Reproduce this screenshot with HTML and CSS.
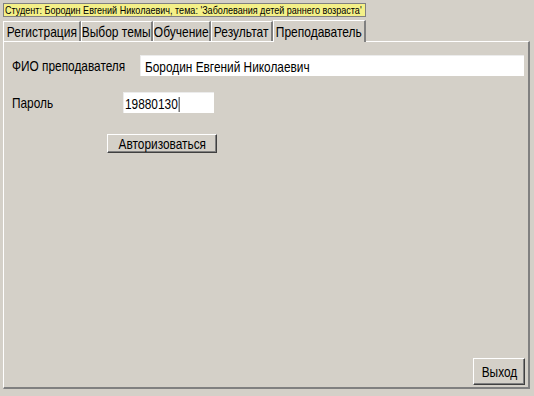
FILE: index.html
```html
<!DOCTYPE html>
<html lang="ru">
<head>
    <meta charset="UTF-8">
    <title>Преподаватель</title>
    <link rel="stylesheet" href="styles.css">
</head>
<body>
    <div class="window">
        <div class="status"><span class="narrow">Студент: Бородин Евгений Николаевич, тема: 'Заболевания детей раннего возраста'</span></div>
        <div class="tabs">
            <div class="tab t-reg"><span class="narrow">Регистрация</span></div>
            <div class="tab t-topic"><span class="narrow">Выбор темы</span></div>
            <div class="tab t-learn"><span class="narrow">Обучение</span></div>
            <div class="tab t-result"><span class="narrow">Результат</span></div>
            <div class="tab t-teacher active"><span class="narrow">Преподаватель</span></div>
        </div>
        <div class="panel">
            <div class="row">
                <label class="label"><span class="narrow">ФИО преподавателя</span></label>
                <div class="field wide"><span class="narrow">Бородин Евгений Николаевич</span></div>
            </div>
            <div class="row pass-row">
                <label class="label short"><span class="narrow">Пароль</span></label>
                <div class="field pass"><span class="narrow">19880130<span class="caret"></span></span></div>
            </div>
            <div class="auth-row">
                <button class="btn auth"><span class="narrow">Авторизоваться</span></button>
            </div>
            <div class="spacer"></div>
            <div class="exit-row">
                <button class="btn exit"><span class="narrow">Выход</span></button>
            </div>
        </div>
    </div>
</body>
</html>
```

FILE: styles.css
```css
body {
    margin: 0;
    background-color: #d4d0c8;
    font-family: 'Liberation Sans', Arial, sans-serif;
    color: #000;
}
/* Arial Narrow look: squeeze the glyphs horizontally */
.narrow {
    display: inline-block;
    white-space: nowrap;
    transform: scaleX(0.79);
    transform-origin: left center;
}
.window {
    width: 534px;
    height: 396px;
    padding: 3px 0 0 3px;
    box-sizing: border-box;
    display: flex;
    flex-direction: column;
}
.status {
    align-self: flex-start;
    background-color: #f4f088;
    border: 1px solid #808080;
    font-size: 11px;
    line-height: 12px;
    padding: 0 1px;
    width: 363px;
    box-sizing: border-box;
    height: 14px;
    overflow: hidden;
}
.status .narrow {
    transform: scaleX(0.822);
}
.tabs {
    display: flex;
    margin-top: 2px;
    height: 22px;
    align-items: flex-end;
}
.tab {
    font-size: 15px;
    height: 20px;
    display: flex;
    align-items: center;
    justify-content: center;
    border-right: 2px solid #808080;
    border-left: 1px solid #fff;
    border-top: 1px solid #fff;
    box-sizing: border-box;
}
.tab .narrow {
    transform: scaleX(0.8);
    transform-origin: center center;
}
.t-reg { width: 78px; }
.t-topic { width: 72px; }
.t-learn { width: 58px; }
.t-result { width: 62px; }
.t-teacher { width: 93px; }
.tab.active {
    height: 22px;
    margin-bottom: -1px;
    padding-bottom: 1px;
    background-color: #d4d0c8;
    position: relative;
    z-index: 1;
}
.panel {
    width: 527px;
    height: 348px;
    box-sizing: border-box;
    border-top: 1px solid #fff;
    border-left: 1px solid #fff;
    border-right: 2px solid #808080;
    border-bottom: 2px solid #808080;
    display: flex;
    flex-direction: column;
    padding: 13px 3px 2px 8px;
}
.row {
    display: flex;
    align-items: center;
    height: 21px;
}
.label {
    font-size: 15px;
}
.row .label {
    width: 128px;
}
.row .label.short {
    width: 111px;
}
.pass-row {
    margin-top: 16px;
}
.field {
    background-color: #fff;
    height: 21px;
    line-height: 21px;
    box-sizing: border-box;
    border-top: 1px solid #ececec;
    border-left: 1px solid #ececec;
    font-size: 15px;
    padding-left: 1px;
    overflow: hidden;
}
.wide {
    width: 384px;
    padding-left: 4px;
}
.pass {
    width: 91px;
}
.caret {
    display: inline-block;
    width: 1px;
    height: 15px;
    background: #000;
    vertical-align: -3px;
    margin-left: 1px;
}
.auth-row {
    margin-top: 21px;
    padding-left: 95px;
}
.btn {
    font-family: 'Liberation Sans', Arial, sans-serif;
    font-size: 15px;
    background-color: #d4d0c8;
    color: #000;
    border-top: 1px solid #fff;
    border-left: 1px solid #fff;
    border-right: 1px solid #404040;
    border-bottom: 1px solid #404040;
    box-shadow: inset -1px -1px 0 #808080;
    padding: 0;
    margin: 0;
    display: flex;
    align-items: center;
    justify-content: center;
}
.btn .narrow {
    transform-origin: center center;
}
.auth {
    width: 110px;
    height: 19px;
}
.spacer {
    flex: 1;
}
.exit-row {
    display: flex;
    justify-content: flex-end;
}
.exit {
    width: 52px;
    height: 27px;
}
```
